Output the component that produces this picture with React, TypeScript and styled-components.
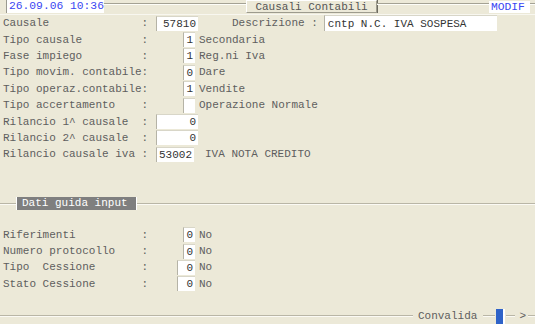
import React from "react";
import styled, { createGlobalStyle } from "styled-components";

const Global = createGlobalStyle`
  html, body { margin: 0; padding: 0; }
  body {
    background: #ece9d8;
    font-family: "Liberation Mono", "Courier New", monospace;
    font-size: 11px;
    color: #5e5e5e;
    width: 535px;
    height: 324px;
    overflow: hidden;
  }
`;

const Screen = styled.div`
  width: 535px;
  height: 324px;
  display: flex;
  flex-direction: column;
`;

const Header = styled.div`
  display: flex;
  align-items: flex-start;
  height: 14px;
  padding-left: 6px;
  border-bottom: 1px solid #f8f7f0;
  white-space: nowrap;
`;

const DateBox = styled.div`
  flex: none;
  box-sizing: border-box;
  width: 98px;
  background: #fff;
  color: #3a46f2;
  font-size: 11.3px;
  line-height: 13px;
  height: 13px;
  padding: 0 0 0 2px;
  border-left: 1px solid #9a9a90;
`;

const Rule = styled.div<{ w: number }>`
  flex: none;
  width: ${(p) => p.w}px;
  height: 0;
  margin-top: 3px;
  border-top: 1px solid #a4a294;
  border-bottom: 1px solid #fdfdf8;
`;

const TitleBox = styled.div`
  flex: none;
  box-sizing: border-box;
  width: 131px;
  height: 13px;
  line-height: 12px;
  text-align: center;
  border: 1px solid #9d9b8d;
  border-top-color: #fff;
  border-left-color: #fff;
  box-shadow: 1px 0 0 #6d6b60;
  color: #555;
  font-size: 11px;
`;

const ModifBox = styled.div`
  flex: none;
  box-sizing: border-box;
  width: 41px;
  margin-top: 1px;
  background: #fff;
  color: #3a46f2;
  font-size: 11.3px;
  line-height: 12px;
  height: 12px;
  padding-left: 2px;
`;

const Form = styled.div`
  display: flex;
  flex-direction: column;
  padding-left: 3px;
`;

const Row = styled.div`
  display: flex;
  align-items: center;
  height: 16.4px;
  white-space: pre;
`;

const Label = styled.span`
  width: 153px;
  flex: none;
`;

const Value = styled.span<{ gap?: number }>`
  margin-left: ${(p) => p.gap ?? 4}px;
`;

const Field = styled.span<{ w: number; ml?: number; align?: string }>`
  display: inline-block;
  flex: none;
  box-sizing: border-box;
  width: ${(p) => p.w}px;
  height: 15px;
  line-height: 15px;
  margin-left: ${(p) => p.ml ?? 0}px;
  background: #fff;
  color: #333;
  font-size: 11px;
  text-align: ${(p) => p.align ?? "right"};
  padding: 0 2px;
  border-left: 1px solid #b5b3a6;
  border-top: 1px solid #d8d6c8;
`;

const DescField = styled.span`
  display: inline-block;
  box-sizing: border-box;
  width: 173px;
  height: 16px;
  line-height: 16px;
  margin-left: 6px;
  background: #fff;
  color: #333;
  font-size: 11px;
  padding: 0 3px;
  border-left: 1px solid #b5b3a6;
  border-top: 1px solid #d8d6c8;
`;

const DescLabel = styled.span`
  margin-left: 34px;
`;

const Spacer = styled.div<{ h: number }>`
  height: ${(p) => p.h}px;
  flex: none;
`;

const Section = styled.div`
  position: relative;
  height: 0;
  border-top: 1px solid #b9b6a6;
  border-bottom: 1px solid #fbfaf4;
`;

const SectionTag = styled.div`
  position: absolute;
  left: 16px;
  top: -7px;
  width: 121px;
  height: 13px;
  line-height: 13px;
  box-sizing: border-box;
  padding-left: 5px;
  background: #7f7f7f;
  color: #fff;
  font-size: 11px;
  border-left: 1px solid #fff;
  border-right: 1px solid #fff;
`;

const Footer = styled.div`
  display: flex;
  align-items: center;
  height: 16px;
  margin-top: auto;
`;

const FootRule = styled.div<{ w?: number }>`
  flex: ${(p) => (p.w ? "none" : "1")};
  width: ${(p) => (p.w ? `${p.w}px` : "auto")};
  height: 0;
  border-top: 1px solid #b9b6a6;
  border-bottom: 1px solid #fbfaf4;
`;

const FootText = styled.span`
  margin: 0 6px 0 5px;
`;

const Marker = styled.div`
  flex: none;
  width: 7px;
  height: 15px;
  background: #2f63c8;
  border-right: 2px solid #fff;
  margin: 0 1px;
`;

const Arrow = styled.span`
  margin: 0 2px 0 4px;
`;

const top = [
  { l: "Tipo causale         :", v: "1", t: "Secondaria" },
  { l: "Fase impiego         :", v: "1", t: "Reg.ni Iva" },
  { l: "Tipo movim. contabile:", v: "0", t: "Dare" },
  { l: "Tipo operaz.contabile:", v: "1", t: "Vendite" },
  { l: "Tipo accertamento    :", v: "", t: "Operazione Normale" },
];

const bottom = [
  { l: "Riferimenti          :", v: "0", w: 12, ml: 27 },
  { l: "Numero protocollo    :", v: "0", w: 12, ml: 27 },
  { l: "Tipo  Cessione       :", v: "0", w: 18, ml: 21 },
  { l: "Stato Cessione       :", v: "0", w: 18, ml: 21 },
];

export default function App() {
  return (
    <Screen>
      <Global />
      <Header>
        <DateBox>26.09.06 10:36</DateBox>
        <Rule w={142} />
        <TitleBox>Causali Contabili</TitleBox>
        <Rule w={112} />
        <ModifBox>MODIF</ModifBox>
        <Rule w={5} />
      </Header>
      <Form>
        <Row>
          <Label>Causale              :</Label>
          <Field w={42}>57810</Field>
          <DescLabel>Descrizione :</DescLabel>
          <DescField>cntp N.C. IVA SOSPESA</DescField>
        </Row>
        {top.map((r) => (
          <Row key={r.l}>
            <Label>{r.l}</Label>
            <Field w={12} ml={27}>{r.v}</Field>
            <Value>{r.t}</Value>
          </Row>
        ))}
        <Row>
          <Label>Rilancio 1^ causale  :</Label>
          <Field w={42}>0</Field>
        </Row>
        <Row>
          <Label>Rilancio 2^ causale  :</Label>
          <Field w={42}>0</Field>
        </Row>
        <Row>
          <Label>Rilancio causale iva :</Label>
          <Field w={38} align="left">53002</Field>
          <Value gap={11}>IVA NOTA CREDITO</Value>
        </Row>
      </Form>
      <Spacer h={40} />
      <Section>
        <SectionTag>Dati guida input</SectionTag>
      </Section>
      <Spacer h={22} />
      <Form>
        {bottom.map((r) => (
          <Row key={r.l}>
            <Label>{r.l}</Label>
            <Field w={r.w} ml={r.ml}>{r.v}</Field>
            <Value>No</Value>
          </Row>
        ))}
      </Form>
      <Footer>
        <FootRule />
        <FootText>Convalida</FootText>
        <FootRule w={12} />
        <Marker />
        <FootRule w={9} />
        <Arrow>&gt;</Arrow>
        <FootRule w={7} />
      </Footer>
    </Screen>
  );
}
